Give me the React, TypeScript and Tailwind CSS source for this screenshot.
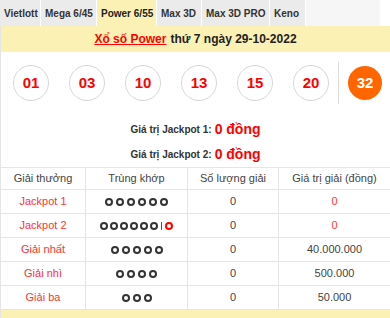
const tabs = [
  { t: "Vietlott", w: "w-[41px]" },
  { t: "Mega 6/45", w: "w-[56px]" },
  { t: "Power 6/55", w: "w-[60px]" },
  { t: "Max 3D", w: "w-[45px]" },
  { t: "Max 3D PRO", w: "w-[68px]" },
  { t: "Keno", w: "w-[36px]" },
];
const balls = ["01", "03", "10", "13", "15", "20"];

function Rings({ n, extra }: { n: number; extra?: boolean }) {
  return (
    <div className={"flex items-center justify-center " + (extra ? "gap-[2px]" : "gap-[3px]")}>
      {Array.from({ length: n }).map((_, i) => (
        <span key={i} className="w-[8px] h-[8px] inline-block rounded-full border-2 border-[#333]" />
      ))}
      {extra && (
        <>
          <span className="inline-block w-[1px] h-[8px] bg-[#555] mx-[1px]" />
          <span className="w-[8px] h-[8px] inline-block rounded-full border-2 border-[#f00]" />
        </>
      )}
    </div>
  );
}

const rows = [
  { name: "Jackpot 1", n: 6, extra: false, qty: "0", val: "0", red: true },
  { name: "Jackpot 2", n: 6, extra: true, qty: "0", val: "0", red: true },
  { name: "Giải nhất", n: 5, extra: false, qty: "0", val: "40.000.000", red: false },
  { name: "Giải nhì", n: 4, extra: false, qty: "0", val: "500.000", red: false },
  { name: "Giải ba", n: 3, extra: false, qty: "0", val: "50.000", red: false },
];

const cols = "grid grid-cols-[85px_102px_91px_1fr]";

export default function App() {
  return (
    <div className="w-[390px] h-[318px] overflow-hidden bg-white text-[#222]" style={{ fontFamily: '"Liberation Sans", Arial, sans-serif' }}>
      {/* tabs */}
      <div className="flex h-[26px] bg-[#f6f6f6] text-[10px] font-bold mr-[10px]">
        {tabs.map(({ t, w }) => (
          <div
            key={t}
            className={
              w + " flex items-center shrink-0 pl-[4px] border-r border-white " +
              (t === "Power 6/55" ? "bg-[#fcf1b4] text-[#222]" : "bg-[#ebebeb] text-[#333]")
            }
          >
            {t}
          </div>
        ))}
        <div className="flex-1" />
      </div>
      <div className="border-l border-[#e5e5e5]">
        {/* title */}
        <div className="h-[26px] bg-[#fcf1b4] flex items-center justify-center text-[12px] font-bold">
          <span className="text-[#f00] underline">Xổ số Power</span>
          <span className="ml-[4px]">thứ 7 ngày 29-10-2022</span>
        </div>
        {/* balls */}
        <div className="flex items-center h-[62px] pl-[12px]">
          <div className="flex gap-[20px]">
            {balls.map((b) => (
              <div key={b} className="w-[36px] h-[36px] rounded-full border-[1.5px] border-[#d6d6d6] flex items-center justify-center text-[#f00] text-[15px] font-bold">
                {b}
              </div>
            ))}
          </div>
          <div className="w-[1px] h-[42px] bg-[#ddd] ml-[9px] mr-[9px]" />
          <div className="w-[34px] h-[34px] rounded-full bg-[#ff6600] flex items-center justify-center text-white text-[15px] font-bold">32</div>
        </div>
        {/* jackpots */}
        <div className="flex flex-col items-center pt-[3px]">
          <div className="flex items-center h-[25px]">
            <span className="text-[10px] font-bold text-[#333]">Giá trị Jackpot 1:</span>
            <span className="ml-[3px] text-[14px] font-bold text-[#f00]">0 đồng</span>
          </div>
          <div className="flex items-center h-[25px]">
            <span className="text-[10px] font-bold text-[#333]">Giá trị Jackpot 2:</span>
            <span className="ml-[3px] text-[14px] font-bold text-[#f00]">0 đồng</span>
          </div>
        </div>
        {/* table */}
        <div className="text-[11px]">
          <div className={cols + " h-[23px] border-t border-b border-[#e5e5e5] text-center text-[#444]"}>
            <div className="border-r border-[#e5e5e5] flex items-center justify-center">Giải thưởng</div>
            <div className="border-r border-[#e5e5e5] flex items-center justify-center">Trùng khớp</div>
            <div className="border-r border-[#e5e5e5] flex items-center justify-center">Số lượng giải</div>
            <div className="flex items-center justify-center">Giá trị giải (đồng)</div>
          </div>
          {rows.map((r) => (
            <div key={r.name} className={cols + " h-[24px] border-b border-[#e5e5e5] text-center"}>
              <div className="border-r border-[#e5e5e5] flex items-center justify-center text-[#f33]">{r.name}</div>
              <div className="border-r border-[#e5e5e5] flex items-center justify-center">
                <Rings n={r.n} extra={r.extra} />
              </div>
              <div className="border-r border-[#e5e5e5] flex items-center justify-center text-[#444]">{r.qty}</div>
              <div className={"flex items-center justify-center " + (r.red ? "text-[#f33]" : "text-[#444]")}>{r.val}</div>
            </div>
          ))}
          <div className="h-[24px] bg-[#fcf1b4] flex items-start justify-center pt-[5px] text-[11px] font-bold text-[#333]">
            <span>Xổ số Mega 6/45 thứ 6 ngày 28-10-2022</span>
          </div>
        </div>
      </div>
    </div>
  );
}
